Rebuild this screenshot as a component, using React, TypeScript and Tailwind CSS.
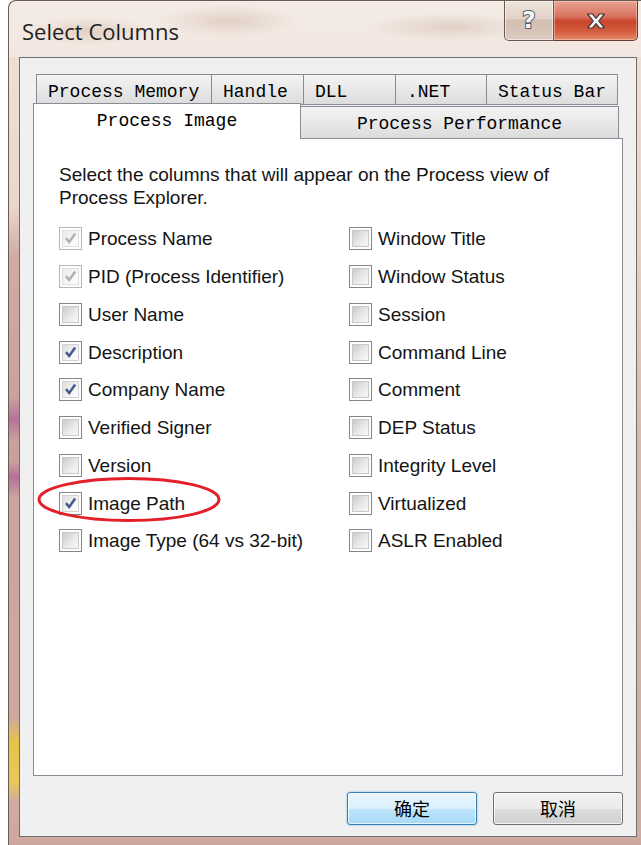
import React from 'react';

type Column = {
  label: string;
  checked?: boolean;
  disabled?: boolean;
  marked?: boolean;
};

const leftColumns: Column[] = [
  { label: 'Process Name', checked: true, disabled: true },
  { label: 'PID (Process Identifier)', checked: true, disabled: true },
  { label: 'User Name' },
  { label: 'Description', checked: true },
  { label: 'Company Name', checked: true },
  { label: 'Verified Signer' },
  { label: 'Version' },
  { label: 'Image Path', checked: true, marked: true },
  { label: 'Image Type (64 vs 32-bit)' },
];

const rightColumns: Column[] = [
  'Window Title',
  'Window Status',
  'Session',
  'Command Line',
  'Comment',
  'DEP Status',
  'Integrity Level',
  'Virtualized',
  'ASLR Enabled',
].map(label => ({ label }));

const backTabs = [
  { label: 'Process Memory', w: 'w-[176px]' },
  { label: 'Handle', w: 'w-[92px]' },
  { label: 'DLL', w: 'w-[92px]' },
  { label: '.NET', w: 'w-[91px]' },
  { label: 'Status Bar', w: 'w-[131px]' },
];

function CheckBox({ checked, disabled }: { checked?: boolean; disabled?: boolean }) {
  return (
    <span
      className={`flex h-[23px] w-[23px] shrink-0 border bg-[#fdfdfd] p-[2px] ${
        disabled ? 'border-[#b5b5b5]' : 'border-[#858686]'
      }`}
    >
      <span
        className={`relative h-full w-full border ${
          disabled
            ? 'border-[#e0e0e0] bg-[linear-gradient(135deg,#eaeaea,#f7f7f7_60%,#fcfcfc)]'
            : checked
              ? 'border-[#d2d2d2] bg-[linear-gradient(135deg,#dedede,#f4f4f4_60%,#fdfdfd)]'
              : 'border-[#c9c9c9] bg-[linear-gradient(135deg,#cacaca,#e9e9e9_55%,#f8f8f8)]'
        }`}
      >
        {checked && (
          <svg viewBox="0 0 16 16" className="absolute inset-0 h-full w-full">
            <path
              d="M2.2 8.4 L4.2 6.7 L6.5 9.5 L11.9 1.9 L14.1 3.5 L6.7 13.8 Z"
              fill={disabled ? '#b0b0b0' : '#475a8e'}
            />
          </svg>
        )}
      </span>
    </span>
  );
}

function CheckRow({ item }: { item: Column }) {
  return (
    <div className="relative flex h-[37.75px] items-center gap-[6px]">
      <CheckBox checked={item.checked} disabled={item.disabled} />
      <span className="whitespace-nowrap text-[19px] leading-none text-[#141414]">{item.label}</span>
      {item.marked && (
        <svg
          className="pointer-events-none absolute left-[-22px] top-[-7px] h-[46px] w-[186px]"
          viewBox="0 0 186 46"
        >
          <ellipse cx="92" cy="22.5" rx="90" ry="21" fill="none" stroke="#e3202a" strokeWidth="3" />
        </svg>
      )}
    </div>
  );
}

function CaptionButtons() {
  return (
    <div className="flex h-[40px] self-start">
      <div className="flex w-[50px] items-center justify-center rounded-bl-[5px] border border-t-0 border-[#6a5a55] bg-[linear-gradient(180deg,#efe3dc,#e2d1c7_45%,#d2bdb1_50%,#dccac0)] shadow-[inset_0_0_0_1px_rgba(255,255,255,0.55)]">
        <span className="font-['DejaVu_Sans',sans-serif] text-[23px] font-bold leading-none text-[#f4f6f8] [-webkit-text-stroke:2px_#55606e] [paint-order:stroke_fill]">
          ?
        </span>
      </div>
      <div className="flex w-[84px] items-center justify-center rounded-br-[5px] border border-l-0 border-t-0 border-[#6a3a32] bg-[linear-gradient(180deg,#e9a595,#d7715d_40%,#c8452c_52%,#d5603f_80%,#e48a6a)] shadow-[inset_0_0_0_1px_rgba(255,220,210,0.45)]">
        <svg viewBox="0 0 22 18" className="h-[18px] w-[22px]">
          <path
            d="M2.5 2 H7.5 L11 6.3 L14.5 2 H19.5 L13.8 9 L19.5 16 H14.5 L11 11.7 L7.5 16 H2.5 L8.2 9 Z"
            fill="#f6f6f6"
            stroke="#4a3a3a"
            strokeWidth="1.2"
            strokeLinejoin="round"
          />
        </svg>
      </div>
    </div>
  );
}

export default function App() {
  return (
    <div className="relative h-[845px] w-[641px] overflow-hidden bg-white font-['Liberation_Sans',Arial,sans-serif]">
      <div className="ml-[8px] flex h-[845px] w-[640px] flex-col overflow-hidden rounded-tl-[8px] border-l border-t border-[#6b5c56] bg-[linear-gradient(180deg,#f4ebe5_0%,#ecdcd1_30%,#e8d3c6_100%)]">
        {/* title bar */}
        <div className="flex h-[56px] shrink-0 items-start pr-[10px] bg-[radial-gradient(ellipse_60px_14px_at_80px_30px,rgba(190,160,140,0.35),transparent),radial-gradient(ellipse_70px_16px_at_220px_20px,rgba(190,160,140,0.35),transparent),radial-gradient(ellipse_80px_14px_at_440px_26px,rgba(180,150,130,0.3),transparent)]">
          <span className="ml-[13px] mt-[16px] font-['Open_Sans',sans-serif] text-[22px] leading-[28px] text-[#1f1f1f]">
            Select Columns
          </span>
          <div className="flex-1" />
          <CaptionButtons />
        </div>

        <div className="flex flex-1">
          {/* left frame */}
          <div className="w-[10px] shrink-0 bg-[linear-gradient(180deg,#efdfd3_0px,#ebd6ca_150px,#cfaba2_200px,#c9a39c_340px,#b5729c_362px,#c9a39d_385px,#c7a09c_405px,#b56f9b_420px,#c9a59e_440px,#cda99f_660px,#e6c448_685px,#e8c95a_725px,#d0aba1_745px,#cca89f_100%)]" />

          {/* client area */}
          <div className="flex w-[618px] shrink-0 flex-col border border-[#6e6e6e] bg-[#f0f0f0] px-[13px] pt-[16px]">
            {/* back row of tabs */}
            <div className="flex h-[31px] pl-[3px]">
              {backTabs.map((t, i) => (
                <div
                  key={t.label}
                  className={`${t.w} flex items-center border-y border-r border-[#898c95] bg-[linear-gradient(180deg,#f4f4f4,#e8e8e8_50%,#dcdcdc)] pl-[11px] pt-[4px] font-['Liberation_Mono',monospace] text-[18px] leading-none text-black ${
                    i === 0 ? 'border-l' : ''
                  }`}
                >
                  {t.label}
                </div>
              ))}
            </div>

            {/* front row of tabs */}
            <div className="mt-[-2px] flex h-[35px] items-end">
              <div className="relative z-10 mb-[-1px] flex h-[36px] w-[268px] items-center justify-center border-x border-t border-[#898c95] bg-white pb-[2px] font-['Liberation_Mono',monospace] text-[18px] leading-none text-black">
                Process Image
              </div>
              <div className="flex h-[32px] w-[318px] items-center justify-center border-r border-t border-[#898c95] bg-[linear-gradient(180deg,#f4f4f4,#e8e8e8_50%,#dcdcdc)] pt-[2px] font-['Liberation_Mono',monospace] text-[18px] leading-none text-black">
                Process Performance
              </div>
            </div>

            {/* tab page */}
            <div className="h-[638px] border border-[#898c95] bg-white pl-[25px] pt-[24px]">
              <p className="text-[19px] leading-[23px] text-[#141414]">
                Select the columns that will appear on the Process view of
                <br />
                Process Explorer.
              </p>
              <div className="mt-[11px] flex">
                <div className="flex w-[290px] flex-col">
                  {leftColumns.map(c => (
                    <CheckRow key={c.label} item={c} />
                  ))}
                </div>
                <div className="flex flex-col">
                  {rightColumns.map(c => (
                    <CheckRow key={c.label} item={c} />
                  ))}
                </div>
              </div>
            </div>

            {/* dialog buttons */}
            <div className="mt-[16px] flex justify-end gap-[16px] font-['Noto_Sans_CJK_SC',sans-serif] text-[18px] text-black">
              <button className="flex h-[33px] w-[130px] items-center justify-center rounded-[3px] border border-[#3c7fb1] bg-[linear-gradient(180deg,#eaf6fd,#d9f0fc_50%,#bee6fd_50%,#a7d9f5)] shadow-[inset_0_0_0_1px_rgba(255,255,255,0.7),0_0_2px_#48b5f0]">
                确定
              </button>
              <button className="flex h-[33px] w-[130px] items-center justify-center rounded-[3px] border border-[#707070] bg-[linear-gradient(180deg,#f2f2f2,#ebebeb_50%,#dddddd_50%,#cfcfcf)] shadow-[inset_0_0_0_1px_rgba(255,255,255,0.75)]">
                取消
              </button>
            </div>
          </div>

          {/* right frame */}
          <div className="flex-1 bg-[linear-gradient(180deg,#efdfd3_0px,#e6cfc3_200px,#d8b7ad_400px,#cfaba1_100%)]" />
        </div>

        {/* bottom frame */}
        <div className="h-[8px] shrink-0 bg-[linear-gradient(180deg,#cfaba2,#c9a49b)]" />
      </div>
    </div>
  );
}
